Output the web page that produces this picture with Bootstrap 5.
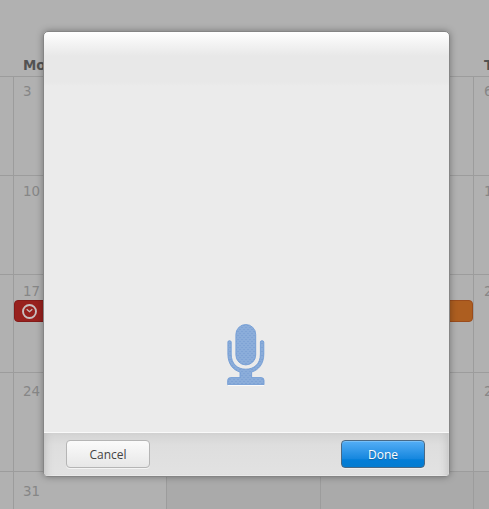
<!DOCTYPE html>
<html lang="en">
<head>
<meta charset="utf-8">
<meta name="viewport" content="width=device-width, initial-scale=1">
<title>Calendar voice note</title>
<link rel="stylesheet" href="https://cdn.jsdelivr.net/npm/bootstrap@5.3.0/dist/css/bootstrap.min.css">
<style>
html,body{height:509px;overflow:hidden}
body{background:#b0b0b0;font-family:"DejaVu Sans",sans-serif;font-size:13.4px;line-height:16px}
.calendar{height:509px;background:#b1b1b1}
.weekdays,.week{display:grid;grid-template-columns:13px 153px 154px 153px 154px;width:627px}
.weekdays{height:76px;padding-top:58px;font-weight:700;color:#535353}
.weekdays span{padding-left:10px}
.weekdays span:last-child{padding-left:11px}
.week{height:99px;color:#868686}
.week.short{height:98px}
.day{border-top:1px solid #9c9c9c;border-left:1px solid #9c9c9c;padding:7px 0 0 9px}
.day:first-child{border-left:0}
.day:last-child{padding-left:10px}
.week-2 .day{padding-top:8px}
.week-3 .day{padding-top:9px}
.week-4 .day{padding-top:11px}
.week-5 .day{padding-top:12px}
.outside{background:#aaa}
.event-bar{margin:0 0 0 -9px;height:22px;border:1px solid #841b19;border-radius:4px;background:#98211e;padding:2px 0 0 6px}
.event-bar svg{display:block}
.event-end{background:#ad5e20;border-color:#9b4c1c}
.sheet{left:43px;top:31px;width:407px;height:446px;border:1px solid #858585;border-radius:5px;background:linear-gradient(#fff,#f3f3f3 12px,#e8e8e8 24px,#e8e8e8 50px,#ebebeb 54px);box-shadow:0 0 7px rgba(0,0,0,.34);overflow:hidden}
.voice-area{height:401px;padding-top:292px;border-bottom:1px solid #f9f9f9;padding-right:2px}
.sheet-footer{height:43px;padding:7px 24px 0 22px;background:linear-gradient(#d3d3d3,#dedede 12px,#e2e2e2);box-shadow:inset 8px 0 9px -7px #bcbcbc,inset -8px 0 9px -7px #bcbcbc,inset -1px -1px #eee}
.sheet .btn{width:84px;height:28px;padding:0;border-radius:4px;font:12px/27px "Open Sans","Noto Sans",sans-serif}
.btn-cancel,.btn-cancel:hover{color:#444;background:linear-gradient(#fbfbfb,#e7e7e7);border:1px solid #b5b5b5;box-shadow:0 1px #f4f4f4}
.btn-done,.btn-done:hover{color:#fff;background:linear-gradient(#55aef5,#1687df 68%,#037ed8 72%,#047bd0);border:1px solid #496985;box-shadow:inset 0 1px #75bff8,0 1px #eee;text-shadow:0 1px 1px #17609b}
</style>
<script src="https://cdn.jsdelivr.net/npm/bootstrap@5.3.0/dist/js/bootstrap.bundle.min.js"></script>
</head>
<body class="position-relative m-0">
<main class="calendar overflow-hidden">
  <div class="weekdays"><span></span><span>Mo</span><span></span><span></span><span>T</span></div>
  <div class="week"><div class="day"></div><div class="day">3</div><div class="day"></div><div class="day"></div><div class="day">6</div></div>
  <div class="week week-2"><div class="day"></div><div class="day">10</div><div class="day"></div><div class="day"></div><div class="day">13</div></div>
  <div class="week week-3 short"><div class="day"></div><div class="day">17
      <div class="event-bar"><svg width="17" height="17" viewBox="0 0 17 17" fill="none" stroke="#c8c0c0"><circle cx="8.5" cy="8.5" r="6.5" stroke-width="1.9"/><path d="m5.7 6.3 2.8 2.4 2.8-2.4" stroke-width="1.3"/></svg></div></div>
    <div class="day"></div><div class="day"><div class="pt-3"><div class="event-bar event-end"></div></div></div><div class="day">20</div></div>
  <div class="week week-4"><div class="day"></div><div class="day">24</div><div class="day"></div><div class="day"></div><div class="day">27</div></div>
  <div class="week week-5"><div class="day"></div><div class="day">31</div><div class="day outside"></div><div class="day outside"></div><div class="day outside"></div></div>
</main>
<section class="sheet position-absolute" role="dialog" aria-label="Voice note">
  <div class="voice-area d-flex justify-content-center">
    <svg width="38" height="62" viewBox="0 0 38 62" aria-hidden="true">
      <defs><pattern id="weave" width="4" height="4" patternUnits="userSpaceOnUse"><rect width="4" height="4" fill="#8badda"/><path d="M0 1.5h2M2 3.5h2" stroke="#7fa3d5"/></pattern></defs>
      <g fill="url(#weave)" stroke="#729cd5" stroke-width=".9">
        <rect x="8.9" y=".5" width="19.8" height="40.4" rx="9.9"/>
        <path d="M.9 18Q.9 16.7 2.5 16.7T4.2 18V30C4.2 40 10.5 45.2 18.8 45.2S33.4 40 33.4 30V18Q33.4 16.7 35 16.7T36.8 18V30C36.8 40 31.5 46.1 24.6 48V53.6H34Q37 53.6 37 56.3V60.7H.7V56.3Q.7 53.6 3.7 53.6H13V48C6.1 46.1.9 40 .9 30Z"/>
      </g>
      <path d="M1 61.5h36" stroke="#fafafa"/>
    </svg>
  </div>
  <div class="sheet-footer d-flex justify-content-between">
    <button class="btn btn-cancel" type="button">Cancel</button>
    <button class="btn btn-done" type="button">Done</button>
  </div>
</section>
</body>
</html>
